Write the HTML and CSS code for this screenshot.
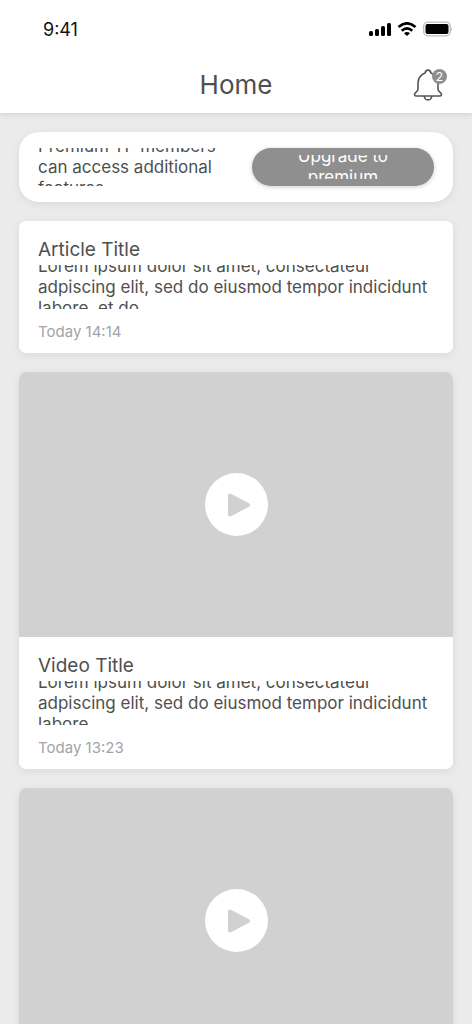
FILE: index.html
```html
<!DOCTYPE html>
<html lang="en">
<head>
  <meta charset="UTF-8">
  <meta name="viewport" content="width=device-width, initial-scale=1.0">
  <title>Home</title>
  <link rel="stylesheet" href="styles.css">
</head>
<body>
  <header class="header">
    <div class="status-bar">
      <span class="time">9:41</span>
      <div class="status-icons">
        <svg width="22" height="14" viewBox="0 0 22 14" aria-hidden="true">
          <rect x="0" y="9" width="4" height="5" rx="1.500"/>
          <rect x="6" y="7" width="4" height="7" rx="1.500"/>
          <rect x="12" y="4" width="4" height="10" rx="1.500"/>
          <rect x="18" y="1" width="4" height="13" rx="1.500"/>
        </svg>
        <svg width="20" height="14" viewBox="0 0 20 14" aria-hidden="true">
          <path d="M1.500 5Q10-2.400 18.500 5M4.700 8.700Q10 4.100 15.300 8.700" fill="none" stroke="#000" stroke-width="2.600"/>
          <path d="M7 11.300Q10 8.900 13 11.300L10 14Z"/>
        </svg>
        <svg width="30" height="16" viewBox="0 0 30 16" aria-hidden="true">
          <rect x="0.700" y="1.200" width="26.600" height="13.600" rx="4" fill="none" stroke="#bdbdbd" stroke-width="1.300"/>
          <rect x="2.500" y="3" width="23" height="10" rx="2"/>
          <path d="M28.500 6q1.500 2 0 4z" fill="#999"/>
        </svg>
      </div>
    </div>
    <div class="title-bar">
      <h1>Home</h1>
      <button class="bell" type="button" aria-label="Notifications">
        <svg width="30" height="34" viewBox="0 0 30 34" fill="none" stroke="#555" stroke-width="1.600" stroke-linecap="round" stroke-linejoin="round" aria-hidden="true">
          <path d="M12.300 4.800C12.300 1.200 17.700 1.200 17.700 4.800C22.500 7 25 11 25 15.500V21C25 24 28.500 24 28.500 26.500Q28.500 28 27 28H3Q1.500 28 1.500 26.500C1.500 24 5 24 5 21V15.500C5 11 7.500 7 12.300 4.800Z"/>
          <path d="M11.300 28.500C12 33 18 33 18.700 28.500"/>
        </svg>
        <span class="badge">2</span>
      </button>
    </div>
  </header>

  <main class="feed">
    <section class="premium">
      <div class="premium-text">
        <p>Premium TP members can access additional features</p>
      </div>
      <button class="upgrade" type="button">
        <span class="upgrade-text">
          <span>Upgrade to premium</span>
        </span>
      </button>
    </section>

    <article class="card">
      <div class="card-body">
        <h2>Article Title</h2>
        <div class="excerpt">
          <p>Lorem ipsum dolor sit amet, consectateur adpiscing elit, sed do eiusmod tempor indicidunt labore, et do</p>
        </div>
        <time>Today 14:14</time>
      </div>
    </article>

    <article class="card">
      <div class="video">
        <button class="play" type="button" aria-label="Play">
          <svg width="24" height="24" viewBox="0 0 24 24" aria-hidden="true">
            <path d="M3 2.500L21 12L3 21.500Z"/>
          </svg>
        </button>
      </div>
      <div class="card-body">
        <h2>Video Title</h2>
        <div class="excerpt">
          <p>Lorem ipsum dolor sit amet, consectateur adpiscing elit, sed do eiusmod tempor indicidunt labore</p>
        </div>
        <time>Today 13:23</time>
      </div>
    </article>

    <article class="card">
      <div class="video">
        <button class="play" type="button" aria-label="Play">
          <svg width="24" height="24" viewBox="0 0 24 24" aria-hidden="true">
            <path d="M3 2.500L21 12L3 21.500Z"/>
          </svg>
        </button>
      </div>
    </article>
  </main>
</body>
</html>
```
FILE: styles.css
```css
* {
  box-sizing: border-box;
}

body {
  font-family: Inter, Roboto, sans-serif;
  background-color: #ebebeb;
  color: #4f4f4f;
  margin: 0;
  height: 100vh;
  display: flex;
  flex-direction: column;
}

h1,
h2,
p {
  margin: 0;
  font-weight: 400;
}

button {
  font-family: inherit;
  border: none;
  padding: 0;
  cursor: pointer;
}

svg {
  display: block;
}

/* Header */
.header {
  background-color: #fff;
  box-shadow: 0 1px 6px rgba(0, 0, 0, 0.12);
  flex-shrink: 0;
  position: relative;
}

.status-bar {
  display: flex;
  justify-content: space-between;
  align-items: center;
  height: 57px;
  padding: 2px 19px 0 43px;
}

.time {
  color: #111;
  font-size: 18px;
}

.status-icons {
  display: flex;
  align-items: center;
  gap: 6px;
  padding-bottom: 2px;
}

.title-bar {
  display: grid;
  grid-template-columns: 1fr auto 1fr;
  align-items: center;
  height: 56px;
  padding: 0 29px;
}

.title-bar h1 {
  grid-column: 2;
  font-size: 26px;
  line-height: 32px;
}

.bell {
  justify-self: end;
  position: relative;
  background: none;
}

.badge {
  position: absolute;
  top: 1px;
  right: -4px;
  width: 15px;
  height: 15px;
  border-radius: 50%;
  background-color: #8f8f8f;
  color: #fff;
  font-size: 12px;
  line-height: 15px;
  text-align: center;
}

/* Feed */
.feed {
  flex: 1;
  display: flex;
  flex-direction: column;
  gap: 19px;
  padding: 19px;
  overflow-y: auto;
  scrollbar-width: none;
}

.premium {
  display: flex;
  justify-content: space-between;
  align-items: center;
  flex-shrink: 0;
  gap: 19px;
  padding: 16px 19px;
  background-color: #fff;
  border-radius: 20px;
  box-shadow: 0 2px 8px rgba(0, 0, 0, 0.08);
}

.premium-text {
  flex: 1;
  display: flex;
  flex-direction: column;
  justify-content: center;
  height: 38px;
  overflow: hidden;
  font-size: 17px;
  line-height: 21px;
}

.upgrade {
  flex: 0 0 46%;
  height: 38px;
  padding: 7px 38px;
  border-radius: 19px;
  background-color: #8f8f8f;
  color: #fff;
  box-shadow: 0 1px 4px rgba(0, 0, 0, 0.2);
}

.upgrade-text {
  display: flex;
  flex-direction: column;
  justify-content: center;
  height: 24px;
  overflow: hidden;
  font-size: 17px;
  line-height: 21px;
}

.card {
  flex-shrink: 0;
  background-color: #fff;
  border-radius: 7px;
  box-shadow: 0 2px 8px rgba(0, 0, 0, 0.08);
  overflow: hidden;
}

.card-body {
  padding: 16px 19px 11px;
}

.card-body h2 {
  margin-bottom: 2px;
  font-size: 19px;
  line-height: 26px;
}

.excerpt {
  display: flex;
  flex-direction: column;
  justify-content: center;
  height: 44px;
  overflow: hidden;
  font-size: 17px;
  line-height: 21px;
}

.card-body time {
  display: block;
  margin-top: 13px;
  color: #a3a3a3;
  font-size: 15px;
  line-height: 20px;
}

.video {
  display: flex;
  justify-content: center;
  align-items: center;
  height: 265px;
  background-color: #d1d1d1;
}

.play {
  display: flex;
  justify-content: center;
  align-items: center;
  width: 63px;
  height: 63px;
  padding-left: 6px;
  border-radius: 50%;
  background-color: #fff;
}

.play path {
  fill: #d1d1d1;
  stroke: #d1d1d1;
  stroke-width: 4px;
  stroke-linejoin: round;
}
```
